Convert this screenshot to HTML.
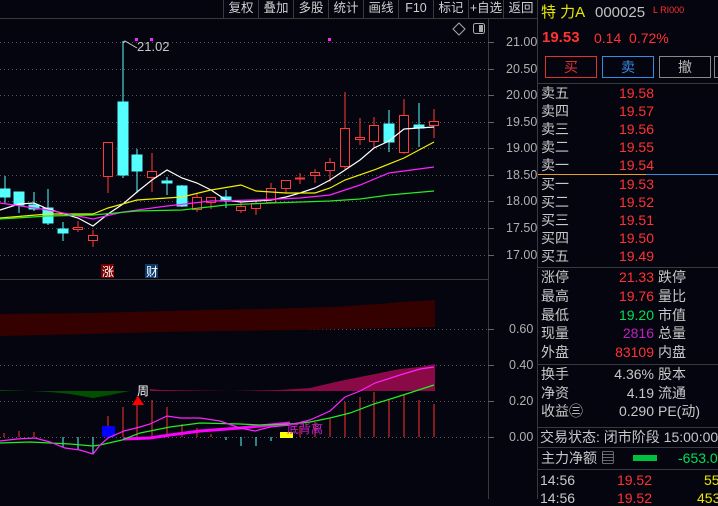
<!DOCTYPE html>
<html><head><meta charset="utf-8"><style>
*{margin:0;padding:0;box-sizing:border-box}
body{width:718px;height:499px;background:#05050f;overflow:hidden;position:relative;font-family:"Liberation Sans","Noto Sans CJK SC",sans-serif;font-size:14px;color:#c8c8c8}
.a{position:absolute;white-space:nowrap;line-height:1}
.tb{position:absolute;top:0;height:18px;width:35px;border-left:1px solid #3a3a3a;text-align:center;line-height:16px;font-size:12.5px;color:#d0d0d0}
.r{color:#ff3333}.g{color:#00e050}.y{color:#e8e800}
.hl{position:absolute;left:538px;width:180px;height:1px;background:#3a3a3a}
.lab{position:absolute;left:541px;line-height:1;white-space:nowrap}
.val{position:absolute;right:64px;line-height:1;text-align:right}
.rl{position:absolute;left:658px;line-height:1;white-space:nowrap}
.ax{position:absolute;left:506px;font-size:12.5px;color:#b0b0b0;line-height:1}
</style></head><body>
<div class="tb" style="left:223px">复权</div><div class="tb" style="left:258px">叠加</div><div class="tb" style="left:293px">多股</div><div class="tb" style="left:328px">统计</div><div class="tb" style="left:363px">画线</div><div class="tb" style="left:398px">F10</div><div class="tb" style="left:433px">标记</div><div class="tb" style="left:468px">+自选</div><div class="tb" style="left:503px;width:35px">返回</div>
<div style="position:absolute;left:0;top:18px;width:538px;height:1px;background:#3a3a3a"></div>
<div style="position:absolute;left:488px;top:18px;width:1px;height:481px;background:#3a3a3a"></div>
<div style="position:absolute;left:537px;top:0;width:1px;height:499px;background:#3a3a3a"></div>
<div style="position:absolute;left:0;top:279px;width:488px;height:1px;background:#3a3a3a"></div>
<svg width="538" height="499" style="position:absolute;left:0;top:0">
<g stroke="#555" stroke-dasharray="1,3" stroke-width="1">
<line x1="0" y1="42.5" x2="488" y2="42.5"/><line x1="0" y1="69.5" x2="488" y2="69.5"/><line x1="0" y1="95.5" x2="488" y2="95.5"/><line x1="0" y1="122.5" x2="488" y2="122.5"/><line x1="0" y1="148.5" x2="488" y2="148.5"/><line x1="0" y1="175.5" x2="488" y2="175.5"/><line x1="0" y1="201.5" x2="488" y2="201.5"/><line x1="0" y1="228.5" x2="488" y2="228.5"/><line x1="0" y1="255.5" x2="488" y2="255.5"/>
<line x1="310" y1="329.5" x2="488" y2="329.5"/><line x1="0" y1="365.5" x2="488" y2="365.5"/><line x1="0" y1="401.5" x2="488" y2="401.5"/><line x1="0" y1="437.5" x2="488" y2="437.5"/>
</g>
<g stroke="#666"><line x1="488" y1="42.5" x2="494" y2="42.5"/><line x1="488" y1="69.5" x2="494" y2="69.5"/><line x1="488" y1="95.5" x2="494" y2="95.5"/><line x1="488" y1="122.5" x2="494" y2="122.5"/><line x1="488" y1="148.5" x2="494" y2="148.5"/><line x1="488" y1="175.5" x2="494" y2="175.5"/><line x1="488" y1="201.5" x2="494" y2="201.5"/><line x1="488" y1="228.5" x2="494" y2="228.5"/><line x1="488" y1="255.5" x2="494" y2="255.5"/><line x1="488" y1="329.5" x2="494" y2="329.5"/><line x1="488" y1="365.5" x2="494" y2="365.5"/><line x1="488" y1="401.5" x2="494" y2="401.5"/><line x1="488" y1="437.5" x2="494" y2="437.5"/></g>
<g stroke-width="1">
<g stroke="#55ffff" fill="#55ffff">
<line x1="5" y1="176" x2="5" y2="203"/><rect x="0" y="189" width="10" height="8"/>
<line x1="19" y1="192" x2="19" y2="213"/><rect x="14" y="192" width="10" height="13"/>
<line x1="34" y1="192" x2="34" y2="211"/><rect x="29" y="205" width="10" height="4"/>
<line x1="48" y1="189" x2="48" y2="225"/><rect x="43" y="208" width="10" height="15"/>
<line x1="63" y1="222" x2="63" y2="241"/><rect x="58" y="229" width="10" height="4"/>
<line x1="123" y1="41" x2="123" y2="178"/><rect x="118" y="102" width="10" height="73"/>
<line x1="137" y1="149" x2="137" y2="193"/><rect x="132" y="155" width="10" height="16"/>
<line x1="167" y1="177" x2="167" y2="195"/><rect x="162" y="181" width="10" height="2"/>
<line x1="182" y1="185" x2="182" y2="207"/><rect x="177" y="186" width="10" height="20"/>
<line x1="226" y1="190" x2="226" y2="208"/><rect x="221" y="197" width="10" height="4"/>
<line x1="389" y1="110" x2="389" y2="152"/><rect x="384" y="124" width="10" height="18"/>
<line x1="419" y1="103" x2="419" y2="147"/><rect x="414" y="125" width="10" height="3"/>
</g>
<g stroke="#ff3a3a" fill="#05050f">
<line x1="78" y1="221" x2="78" y2="232"/><rect x="73.5" y="227.5" width="9" height="2"/>
<line x1="93" y1="230" x2="93" y2="247"/><rect x="88.5" y="235.5" width="9" height="5"/>
<line x1="108" y1="142" x2="108" y2="193"/><rect x="103.5" y="142.5" width="9" height="34"/>
<line x1="152" y1="153" x2="152" y2="192"/><rect x="147.5" y="171.5" width="9" height="6"/>
<line x1="197" y1="193" x2="197" y2="212"/><rect x="192.5" y="197.5" width="9" height="12"/>
<line x1="211" y1="197" x2="211" y2="209"/><rect x="206.5" y="197.5" width="9" height="5"/>
<line x1="241" y1="202" x2="241" y2="213"/><rect x="236.5" y="206.5" width="9" height="4"/>
<line x1="256" y1="200" x2="256" y2="215"/><rect x="251.5" y="203.5" width="9" height="5"/>
<line x1="271" y1="183" x2="271" y2="203"/><rect x="266.5" y="188.5" width="9" height="14"/>
<line x1="286" y1="180" x2="286" y2="193"/><rect x="281.5" y="180.5" width="9" height="8"/>
<line x1="300" y1="173" x2="300" y2="184"/><line x1="295" y1="178.5" x2="305" y2="178.5" stroke-width="2"/>
<line x1="315" y1="169" x2="315" y2="183"/><rect x="310.5" y="172.5" width="9" height="3"/>
<line x1="330" y1="158" x2="330" y2="182"/><rect x="325.5" y="162.5" width="9" height="8"/>
<line x1="345" y1="92" x2="345" y2="169"/><rect x="340.5" y="128.5" width="9" height="38"/>
<line x1="360" y1="118" x2="360" y2="145"/><rect x="355.5" y="137.5" width="9" height="2"/>
<line x1="374" y1="117" x2="374" y2="148"/><rect x="369.5" y="125.5" width="9" height="16"/>
<line x1="404" y1="99" x2="404" y2="154"/><rect x="399.5" y="115.5" width="9" height="37"/>
<line x1="434" y1="109" x2="434" y2="138"/><rect x="429.5" y="121.5" width="9" height="4"/>
</g></g>
<g fill="none" stroke-width="1.2">
<polyline stroke="#ffffff" points="0,210 19,204 34,203 48,209 78,218 93,226 108,214 123,204 137,192 152,180 167,170 182,178 197,183 211,190 226,200 241,202 256,201 271,200 286,197 300,193 315,188 330,180 345,170 360,160 374,148 389,141 404,129 419,128 434,127"/>
<polyline stroke="#f0f000" points="0,218 48,214 93,214 108,208 137,200 182,197 211,190 241,185 256,191 286,193 315,193 330,188 345,180 374,170 404,158 434,142"/>
<polyline stroke="#ff22ff" points="0,203 48,210 93,219 123,212 167,206 211,201 256,200 300,198 330,195 360,185 389,173 434,167"/>
<polyline stroke="#22ee22" points="0,219 48,216 93,215 137,211 182,210 226,205 271,203 330,201 360,199 389,195 434,191"/>
</g>
<polyline fill="none" stroke="#ccc" points="137,48 125,41 123,43"/>
<text x="137" y="51" fill="#c8c8c8" font-size="13" font-family="Liberation Sans">21.02</text>
<rect x="135" y="38" width="3" height="3" fill="#ff22ff"/><rect x="150" y="38" width="3" height="3" fill="#ff22ff"/><rect x="328" y="38" width="3" height="3" fill="#ff22ff"/>
<path d="M459 23 L465 29 L459 35 L453 29Z" fill="none" stroke="#aaa"/>
<rect x="473.5" y="23.5" width="11" height="10" rx="2" fill="none" stroke="#aaa"/><rect x="479" y="25" width="4" height="7" fill="#aaa"/>
<rect x="101" y="264" width="13" height="14" fill="#7a0000"/>
<text x="102" y="276" fill="#fff" font-size="12" font-family="Noto Sans CJK SC">涨</text>
<rect x="145" y="264" width="13" height="14" fill="#0a3a6a"/>
<text x="146" y="276" fill="#fff" font-size="12" font-family="Noto Sans CJK SC">财</text>
<polygon fill="#340000" points="0,314 87,313 130,312 200,310 260,309 330,307 380,304 400,302 435,300 435,327 300,330 160,332 90,334 0,336"/>
<polygon fill="#005000" points="0,390 30,391 50,392 70,394 93,398 110,395 130,391 0,391"/>
<polygon fill="#8a0a48" points="150,389 160,390 230,391 280,390 310,388 340,381 360,377 380,373 400,369 420,367 435,364 435,391 150,391"/>
<g stroke="#ff3030" stroke-width="1">
<line x1="4" y1="433" x2="4" y2="437"/><line x1="19" y1="431" x2="19" y2="437"/><line x1="34" y1="432" x2="34" y2="437"/><line x1="108" y1="416" x2="108" y2="437"/><line x1="123" y1="407" x2="123" y2="437"/><line x1="137" y1="397" x2="137" y2="437"/><line x1="152" y1="400" x2="152" y2="437"/><line x1="167" y1="407" x2="167" y2="437"/><line x1="182" y1="424" x2="182" y2="437"/><line x1="197" y1="428" x2="197" y2="437"/><line x1="211" y1="434" x2="211" y2="437"/><line x1="300" y1="426" x2="300" y2="437"/><line x1="315" y1="422" x2="315" y2="437"/><line x1="330" y1="419" x2="330" y2="437"/><line x1="345" y1="402" x2="345" y2="437"/><line x1="360" y1="397" x2="360" y2="437"/><line x1="374" y1="392" x2="374" y2="437"/><line x1="389" y1="399" x2="389" y2="437"/><line x1="404" y1="394" x2="404" y2="437"/><line x1="419" y1="400" x2="419" y2="437"/><line x1="434" y1="404" x2="434" y2="437"/>
</g>
<g stroke="#55ffff"><line x1="63" y1="437" x2="63" y2="447"/><line x1="78" y1="437" x2="78" y2="449"/><line x1="93" y1="437" x2="93" y2="453"/><line x1="226" y1="437" x2="226" y2="440"/><line x1="241" y1="437" x2="241" y2="446"/><line x1="256" y1="437" x2="256" y2="446"/><line x1="271" y1="437" x2="271" y2="441"/></g>
<rect x="102" y="426" width="13" height="11" fill="#0000ff"/>
<rect x="280" y="432" width="13" height="6" fill="#ffff00"/>
<polyline fill="none" stroke="#ff00ff" stroke-width="3" points="123,439 150,438 170,435 200,431 240,428 270,425 290,423"/>
<polyline fill="none" stroke="#22ee22" stroke-width="1.2" points="0,443 30,442 50,443 70,444 93,446 100,445 122,440 140,433 170,427 200,423 240,424 260,425 290,424 310,422 330,418 350,413 374,404 400,396 434,385"/>
<polyline fill="none" stroke="#ff22ff" stroke-width="1.2" points="0,441 17,439 35,438 50,442 65,448 80,450 93,454 100,445 108,438 124,431 140,427 150,424 167,416 180,418 200,418 220,421 240,428 255,431 270,427 290,425 310,420 330,411 345,397 360,391 375,383 400,375 420,369 434,367"/>
<polygon fill="#ff0000" points="138,396 132,405 144,405"/>
<text x="137" y="395" fill="#fff" font-size="12" font-family="Noto Sans CJK SC">周</text>
<text x="287" y="433" fill="#cc22cc" font-size="12" font-family="Noto Sans CJK SC">底背离</text>
</svg>
<div class="ax" style="top:36px">21.00</div><div class="ax" style="top:63px">20.50</div><div class="ax" style="top:89px">20.00</div><div class="ax" style="top:116px">19.50</div><div class="ax" style="top:142px">19.00</div><div class="ax" style="top:169px">18.50</div><div class="ax" style="top:195px">18.00</div><div class="ax" style="top:222px">17.50</div><div class="ax" style="top:249px">17.00</div>
<div class="ax" style="top:323px;left:509px">0.60</div><div class="ax" style="top:359px;left:509px">0.40</div><div class="ax" style="top:395px;left:509px">0.20</div><div class="ax" style="top:431px;left:509px">0.00</div>
<div class="a y" style="left:541px;top:5px;font-size:15px">特 力A</div>
<div class="a" style="left:595px;top:5px;font-size:15px;color:#c0c0c0">000025</div>
<div class="a r" style="left:653px;top:6px;font-size:9px">L RI000</div>
<div class="a r" style="left:542px;top:30px;font-size:15px;font-weight:bold">19.53</div>
<div class="a r" style="left:594px;top:31px;font-size:14px">0.14&nbsp; 0.72%</div>
<div class="a" style="left:545px;top:56px;width:52px;height:22px;border:1px solid #e03030;color:#e03030;text-align:center;line-height:20px">买</div>
<div class="a" style="left:602px;top:56px;width:52px;height:22px;border:1px solid #3a8ae0;color:#3a8ae0;text-align:center;line-height:20px">卖</div>
<div class="a" style="left:659px;top:56px;width:52px;height:22px;border:1px solid #888;color:#bbb;text-align:center;line-height:20px">撤</div>
<div class="a" style="left:714px;top:56px;width:10px;height:22px;border:1px solid #888"></div>
<div class="hl" style="top:83px"></div>
<div class="lab" style="top:86px">卖五</div><div class="val r" style="top:86px">19.58</div>
<div class="lab" style="top:104px">卖四</div><div class="val r" style="top:104px">19.57</div>
<div class="lab" style="top:122px">卖三</div><div class="val r" style="top:122px">19.56</div>
<div class="lab" style="top:140px">卖二</div><div class="val r" style="top:140px">19.55</div>
<div class="lab" style="top:158px">卖一</div><div class="val r" style="top:158px">19.54</div>
<div style="position:absolute;left:538px;top:174px;width:108px;height:1px;background:#e8a020"></div>
<div style="position:absolute;left:646px;top:174px;width:72px;height:1px;background:#3a8ae0"></div>
<div class="lab" style="top:177px">买一</div><div class="val r" style="top:177px">19.53</div>
<div class="lab" style="top:195px">买二</div><div class="val r" style="top:195px">19.52</div>
<div class="lab" style="top:213px">买三</div><div class="val r" style="top:213px">19.51</div>
<div class="lab" style="top:231px">买四</div><div class="val r" style="top:231px">19.50</div>
<div class="lab" style="top:249px">买五</div><div class="val r" style="top:249px">19.49</div>
<div class="hl" style="top:267px"></div>
<div class="lab" style="top:270px">涨停</div><div class="val r" style="top:270px">21.33</div><div class="rl" style="top:270px">跌停</div>
<div class="lab" style="top:289px">最高</div><div class="val r" style="top:289px">19.76</div><div class="rl" style="top:289px">量比</div>
<div class="lab" style="top:308px">最低</div><div class="val g" style="top:308px">19.20</div><div class="rl" style="top:308px">市值</div>
<div class="lab" style="top:326px">现量</div><div class="val" style="top:326px;color:#c020c0">2816</div><div class="rl" style="top:326px">总量</div>
<div class="lab" style="top:345px">外盘</div><div class="val r" style="top:345px">83109</div><div class="rl" style="top:345px">内盘</div>
<div class="hl" style="top:364px"></div>
<div class="lab" style="top:367px">换手</div><div class="val" style="top:367px">4.36%</div><div class="rl" style="top:367px">股本</div>
<div class="lab" style="top:386px">净资</div><div class="val" style="top:386px">4.19</div><div class="rl" style="top:386px">流通</div>
<div class="lab" style="top:404px">收益㊂</div><div class="val" style="top:404px">0.290</div><div class="rl" style="top:404px">PE(动)</div>
<div class="hl" style="top:427px"></div>
<div class="lab" style="top:430px;left:540px">交易状态: 闭市阶段 15:00:00</div>
<div class="hl" style="top:447px"></div>
<div class="lab" style="top:451px">主力净额 ▤</div>
<div class="a" style="left:633px;top:455px;width:24px;height:6px;background:#00c040"></div>
<div class="a g" style="left:678px;top:451px">-653.0</div>
<div class="hl" style="top:469px"></div>
<div class="lab" style="top:473px;left:540px">14:56</div><div class="val r" style="top:473px;right:66px">19.52</div><div class="a y" style="left:704px;top:473px">55</div>
<div class="lab" style="top:491px;left:540px">14:56</div><div class="val r" style="top:491px;right:66px">19.52</div><div class="a y" style="left:697px;top:491px">453</div>
</body></html>
